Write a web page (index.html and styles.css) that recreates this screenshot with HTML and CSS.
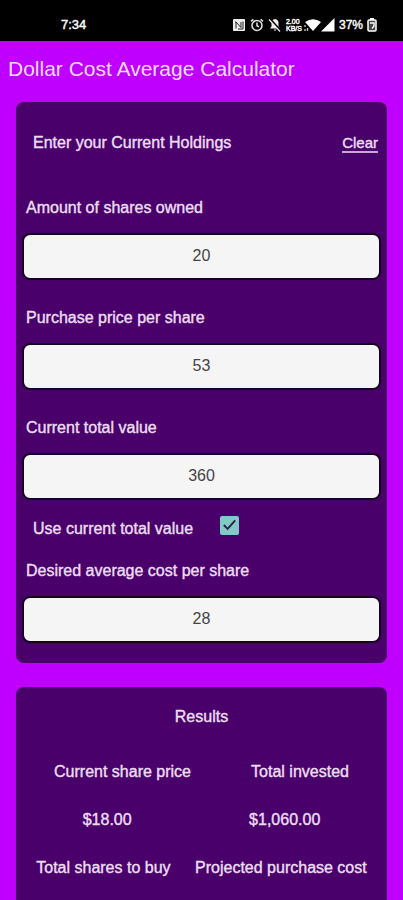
FILE: index.html
```
<!DOCTYPE html>
<html lang="en">
<head>
<meta charset="utf-8">
<meta name="viewport" content="width=device-width, initial-scale=1">
<title>Dollar Cost Average Calculator</title>
<link rel="stylesheet" href="styles.css">
</head>
<body>
<div class="status">
  <time class="clock">7:34</time>
  <div class="indicators">
    <svg width="14" height="14" viewBox="0 0 14 14"><rect x="1" y="1" width="12" height="12" rx="1" fill="#eee"/><path d="M4 10.500V4l5 5.500V4M4 4H3M11 3.500V11H6" fill="none" stroke="#222" stroke-width="1"/></svg>
    <svg width="14" height="14" viewBox="0 0 14 14" fill="none" stroke="#ddd" stroke-width="1.6"><circle cx="7" cy="7.5" r="5"/><path d="M7 4.5v3.2l2 1.2M1 3.4l2.4-2M13 3.4l-2.4-2"/></svg>
    <svg width="14" height="14" viewBox="0 0 14 14"><path d="M7 1c-2.6.6-3.5 2-3.5 4v3.500L2 10.500h10l-1.500-2V5c0-2-.9-3.400-3.500-4zM5.500 11.500h3L7 13z" fill="#eee"/><path d="M2 1l11 12" stroke="#000" stroke-width="2"/><path d="M1 1.500l11 12" stroke="#eee" stroke-width="1.200"/></svg>
    <div class="network">
      <span class="speed"><span>2.00</span><span>KB/S</span></span>
      <svg width="18" height="14" viewBox="0 0 18 14"><path d="M2 4Q10-1.500 18 4L10 13z" fill="#fff"/><path d="M2 7v2M2 11v2M4.500 10v3" stroke="#bbb" stroke-width="1.400"/></svg>
      <svg width="14" height="14" viewBox="0 0 14 14"><path d="M13.500 0v13.500H0z" fill="#fff"/></svg>
    </div>
    <span class="percent">37%</span>
    <svg width="10" height="14" viewBox="0 0 10 14"><path d="M3 0h4v2H3z" fill="#fff"/><rect x="1" y="2" width="8" height="11" rx="1" fill="#444" stroke="#fff" stroke-width="1.500"/><path d="M3 5h4v3L5 10.500" fill="none" stroke="#fff" stroke-width="1.400"/></svg>
  </div>
</div>
<header class="title-bar"><h1>Dollar Cost Average Calculator</h1></header>
<main>
  <form class="card holdings">
    <div class="card-head">
      <h2>Enter your Current Holdings</h2>
      <button type="button" class="clear">Clear</button>
    </div>
    <div class="field">
      <label for="shares">Amount of shares owned</label>
      <input id="shares" type="text" inputmode="decimal" value="20">
    </div>
    <div class="field">
      <label for="price">Purchase price per share</label>
      <input id="price" type="text" inputmode="decimal" value="53">
    </div>
    <div class="field">
      <label for="value">Current total value</label>
      <input id="value" type="text" inputmode="decimal" value="360">
    </div>
    <div class="toggle">
      <label for="use-value">Use current total value</label>
      <span class="tick">
        <input id="use-value" type="checkbox" checked>
        <svg viewBox="0 0 20 20"><path d="M4 9.500l4 4 8-9" fill="none" stroke="#30204f" stroke-width="2"/></svg>
      </span>
    </div>
    <div class="field">
      <label for="desired">Desired average cost per share</label>
      <input id="desired" type="text" inputmode="decimal" value="28">
    </div>
  </form>
  <section class="card results">
    <h2>Results</h2>
    <div class="row"><span>Current share price</span><span>Total invested</span></div>
    <div class="row"><span>$18.00</span><span>$1,060.00</span></div>
    <div class="row"><span>Total shares to buy</span><span>Projected purchase cost</span></div>
  </section>
</main>
</body>
</html>
```
FILE: styles.css
```
* { box-sizing: border-box; }
body {
  margin: 0;
  background: #bf00ff;
  color: #eadff2;
  font: 16px/20px "Liberation Sans", Arial, sans-serif;
  -webkit-text-stroke: 0.4px currentColor;
}
h1, h2 { margin: 0; font-weight: normal; }
h2 { font-size: 16px; line-height: 20px; }
.status {
  display: flex;
  align-items: center;
  justify-content: space-between;
  height: 41px;
  padding: 8px 26px 0 61px;
  background: #000;
  color: #fff;
  font-size: 13px;
}
.indicators { display: flex; align-items: center; gap: 4px; }
.indicators svg { display: block; }
.network { display: flex; align-items: center; }
.speed {
  display: flex;
  flex-direction: column;
  width: 17px;
  font-size: 7px;
  line-height: 7px;
}
.percent { font-size: 12px; }
.title-bar { padding: 16px 8px; }
.title-bar h1 { font-size: 21px; line-height: 24px; color: #fbdcff; -webkit-text-stroke: 0; }
main { display: flex; flex-direction: column; gap: 24px; padding: 5px 16px 0; }
.card { border-radius: 8px; background: #4a006a; }
.holdings { padding: 31px 6px 20px; }
.card-head {
  display: flex;
  justify-content: space-between;
  align-items: center;
  padding: 0 3px 0 11px;
  margin-bottom: 45px;
}
.clear {
  padding: 0;
  border: 0;
  border-bottom: 2px solid #c5a9d2;
  background: none;
  color: inherit;
  font: 15px/17px "Liberation Sans", Arial, sans-serif;
  -webkit-text-stroke: inherit;
}
.field { display: flex; flex-direction: column; gap: 15px; }
.field + .field { margin-top: 28px; }
.field label { padding-left: 4px; }
.field input {
  width: 100%;
  height: 47px;
  padding: 0 8px 2px;
  border: 2px solid #160022;
  border-radius: 8px;
  background: #f5f5f5;
  color: #444;
  font: 16px/20px "Liberation Sans", Arial, sans-serif;
  text-align: center;
  -webkit-text-stroke: 0;
}
.toggle { display: flex; gap: 27px; padding: 16px 11px 22px; }
.toggle label { padding-top: 3px; }
.tick { display: grid; width: 19px; height: 19px; }
.tick input, .tick svg { grid-area: 1 / 1; width: 100%; height: 100%; margin: 0; }
.tick input { appearance: none; border-radius: 2px; background: #80cbc4; }
.tick svg { pointer-events: none; }
.results {
  display: flex;
  flex-direction: column;
  gap: 28px;
  padding: 20px 8px 23px;
  border-radius: 8px 8px 0 0;
  text-align: center;
}
.results h2 { margin-bottom: 7px; }
.row { display: flex; justify-content: space-around; }
```
